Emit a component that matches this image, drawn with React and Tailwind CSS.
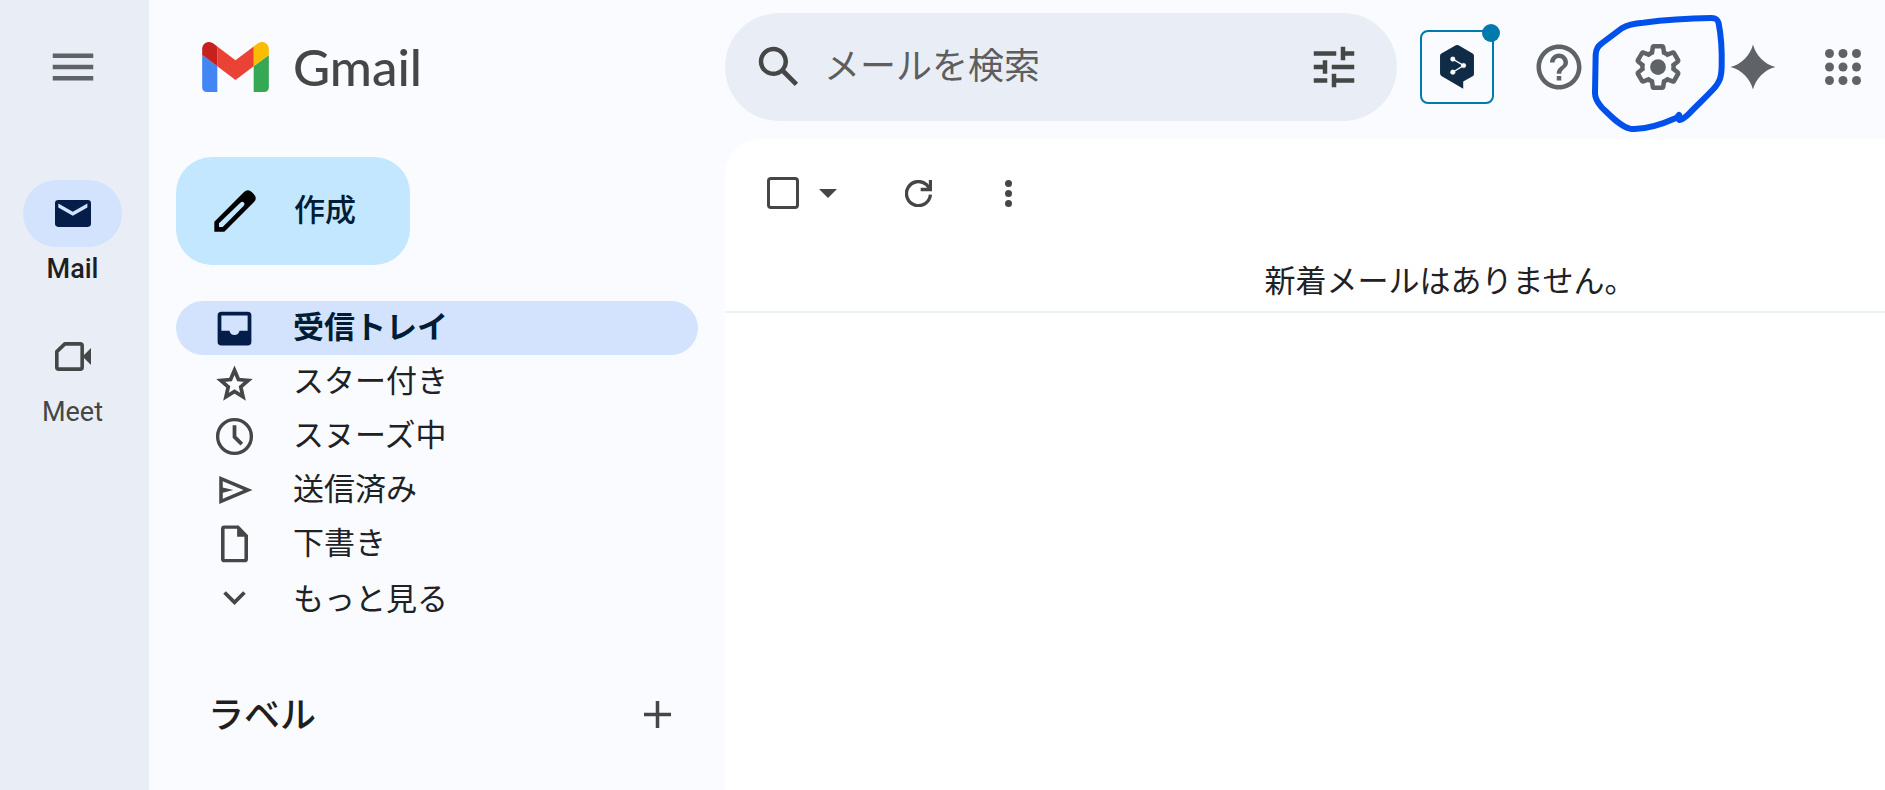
import React, { useState } from "react";
import clsx from "clsx";

const folders = [
  { id: "inbox", label: "受信トレイ", icon: InboxIcon },
  { id: "starred", label: "スター付き", icon: StarIcon },
  { id: "snoozed", label: "スヌーズ中", icon: ClockIcon },
  { id: "sent", label: "送信済み", icon: SendIcon },
  { id: "drafts", label: "下書き", icon: DraftIcon },
];

export default function App() {
  const [activeFolder, setActiveFolder] = useState("inbox");

  return (
    <div className="flex min-h-screen overflow-hidden bg-[#f9fbff] font-['Roboto','Noto_Sans_CJK_JP',sans-serif] text-[#1f1f1f]">
      <AppRail />
      <div className="flex min-w-0 flex-1 flex-col">
        <TopBar />
        <div className="flex flex-1">
          <Sidebar active={activeFolder} onSelect={setActiveFolder} />
          <MailPanel />
        </div>
      </div>
    </div>
  );
}

function AppRail() {
  return (
    <aside className="flex w-[149px] shrink-0 flex-col items-center bg-[#e9eef6] pr-1 pt-10">
      <button type="button" aria-label="メインメニュー" className="text-[#5f6368]">
        <svg viewBox="0 0 24 24" fill="currentColor" className="size-[54px]">
          <path d="M3 18h18v-2H3v2zm0-5h18v-2H3v2zm0-7v2h18V6H3z" />
        </svg>
      </button>
      <nav className="mt-[86px] flex flex-col gap-9">
        <a href="#mail" className="flex flex-col items-center">
          <span className="flex h-[67px] w-[99px] items-center justify-center rounded-full bg-[#d3e3fd] text-[#041e49]">
            <MailIcon />
          </span>
          <span className="mt-1 text-[27px] leading-9 font-medium">Mail</span>
        </a>
        <a href="#meet" className="flex flex-col items-center text-[#444746]">
          <span className="flex h-[67px] w-[99px] items-center justify-center">
            <MeetIcon />
          </span>
          <span className="mt-1 text-[27px] leading-9">Meet</span>
        </a>
      </nav>
    </aside>
  );
}

function TopBar() {
  return (
    <header className="flex items-center pt-[13px] pr-[15px] pb-[18px]">
      <a href="#inbox" className="flex w-[576px] shrink-0 items-center gap-6 pl-[53px]">
        <GmailLogo />
        <span className="font-['Lato',sans-serif] text-[51px] leading-[54px] font-medium text-[#444746]">
          Gmail
        </span>
      </a>

      {/* Search */}
      <form
        role="search"
        className="flex h-[108px] min-w-0 flex-1 items-center rounded-full bg-[#e9eef6] pr-9 pl-[27px]"
        onSubmit={(e) => e.preventDefault()}
      >
        <button type="submit" aria-label="検索" className="text-[#444746]">
          <svg viewBox="0 0 24 24" fill="currentColor" className="size-[54px]">
            <path d="M20.49 19l-5.73-5.73C15.53 12.2 16 10.91 16 9.5 16 5.91 13.09 3 9.5 3S3 5.91 3 9.5 5.91 16 9.5 16c1.41 0 2.7-.47 3.77-1.24L19 20.49 20.49 19zM5 9.5C5 7.01 7.01 5 9.5 5S14 7.01 14 9.5 11.99 14 9.5 14 5 11.99 5 9.5z" />
          </svg>
        </button>
        <input
          type="text"
          aria-label="メールを検索"
          placeholder="メールを検索"
          className="ml-[18px] h-[54px] min-w-0 flex-1 bg-transparent text-[36px] leading-[54px] outline-none placeholder:text-[#5e5e5e]"
        />
        <button type="button" aria-label="検索オプション" className="text-[#444746]">
          <svg viewBox="0 0 24 24" fill="currentColor" className="size-[54px]">
            <path d="M3 17v2h6v-2H3zM3 5v2h10V5H3zm10 16v-2h8v-2h-8v-2h-2v6h2zM7 9v2H3v2h4v2h2V9H7zm14 4v-2H11v2h10zm-6-4h2V7h4V5h-4V3h-2v6z" />
          </svg>
        </button>
      </form>

      <div className="ml-[23px] flex shrink-0 items-center text-[#5f6368]">
        <button
          type="button"
          aria-label="DeepL"
          className="relative flex size-[74px] items-center justify-center rounded-lg border-2 border-[#0079ac]"
        >
          <DeepLIcon />
          <span className="absolute -top-2 -right-2 size-[18px] rounded-full bg-[#0079ac]" />
        </button>
        <button type="button" aria-label="サポート" className="ml-[38px]">
          <svg viewBox="0 0 24 24" fill="currentColor" className="size-[54px]">
            <path d="M11 18h2v-2h-2v2zm1-16C6.48 2 2 6.48 2 12s4.48 10 10 10 10-4.48 10-10S17.52 2 12 2zm0 18c-4.41 0-8-3.59-8-8s3.59-8 8-8 8 3.59 8 8-3.59 8-8 8zm0-14c-2.21 0-4 1.79-4 4h2c0-1.1.9-2 2-2s2 .9 2 2c0 2-3 1.75-3 5h2c0-2.25 3-2.5 3-5 0-2.21-1.79-4-4-4z" />
          </svg>
        </button>
        <button type="button" aria-label="設定" className="relative ml-[45px]">
          <GearIcon />
          <HandDrawnCircle />
        </button>
        <button type="button" aria-label="Gemini" className="ml-[41px]">
          <svg viewBox="0 0 24 24" fill="currentColor" className="size-[54px]">
            <path d="M12 2c1.1 4.6 5.2 8.9 10 10-4.8 1.1-8.9 5.4-10 10-1.1-4.6-5.2-8.9-10-10 4.8-1.1 8.9-5.4 10-10z" />
          </svg>
        </button>
        <button type="button" aria-label="Google アプリ" className="ml-9">
          <svg viewBox="0 0 24 24" fill="currentColor" className="size-[54px]">
            {[6, 12, 18].map((cy) =>
              [6, 12, 18].map((cx) => <circle key={`${cx}-${cy}`} cx={cx} cy={cy} r="2" />)
            )}
          </svg>
        </button>
      </div>
    </header>
  );
}

function Sidebar({ active, onSelect }) {
  return (
    <div className="w-[576px] shrink-0 pt-[18px] pr-[27px] pl-[27px]">
      <button
        type="button"
        className="flex h-[108px] w-[234px] items-center rounded-[36px] bg-[#c2e7ff] pl-8 text-[31px] font-medium text-[#001d35]"
      >
        <PencilIcon />
        <span className="ml-8">作成</span>
      </button>

      <nav className="mt-9">
        {folders.map(({ id, label, icon: Icon }) => (
          <a
            key={id}
            href={`#${id}`}
            onClick={() => onSelect(id)}
            className={clsx(
              "flex h-[54px] items-center rounded-full pl-9 text-[31px] leading-[54px]",
              active === id ? "bg-[#d3e3fd] font-bold text-[#001d35]" : "text-[#202124]"
            )}
          >
            <span
              className={clsx(
                "flex w-[45px] justify-center",
                active === id ? "text-[#041e49]" : "text-[#444746]"
              )}
            >
              <Icon />
            </span>
            <span className="ml-9">{label}</span>
          </a>
        ))}
        <button
          type="button"
          className="mt-0.5 flex h-[54px] w-full items-center pl-9 text-[31px] leading-[54px] text-[#202124]"
        >
          <svg viewBox="0 0 24 24" fill="currentColor" className="size-[45px] text-[#444746]">
            <path d="M16.59 7L12 11.600 7.410 7 6 8.400l6 6 6-6z" />
          </svg>
          <span className="ml-9">もっと見る</span>
        </button>
      </nav>

      {/* Labels */}
      <div className="mt-[60px] flex h-[54px] items-center justify-between pr-[27px] pl-8">
        <h2 className="pt-1 text-[36px] leading-[54px] font-medium">ラベル</h2>
        <button type="button" aria-label="新しいラベルを作成" className="text-[#444746]">
          <svg viewBox="0 0 27 27" stroke="currentColor" strokeWidth="3.5" className="size-[27px]">
            <path d="M13.5 0v27M0 13.5h27" />
          </svg>
        </button>
      </div>
    </div>
  );
}

function MailPanel() {
  return (
    <main className="min-w-0 flex-1 rounded-tl-[36px] bg-white">
      <div className="flex h-[108px] items-center pl-[42px] text-[#444746]">
        <input
          type="checkbox"
          aria-label="選択"
          className="size-8 appearance-none rounded-[4px] border-3 border-[#444746] checked:bg-[#444746]"
        />
        <button type="button" aria-label="選択オプション" className="ml-5">
          <svg viewBox="0 0 18 9" fill="currentColor" className="h-[9px] w-[18px]">
            <path d="M0 0h18L9 9z" />
          </svg>
        </button>
        <button type="button" aria-label="更新" className="ml-[68px]">
          <svg viewBox="0 0 81 81" fill="none" stroke="currentColor" strokeWidth="10" className="size-[27px]">
            <path d="M76.3 44A36 36 0 1 1 64 13.5L74 25" />
            <path d="M76.500 0v28.500H47" />
          </svg>
        </button>
        <button type="button" aria-label="その他" className="ml-[73px]">
          <svg viewBox="0 0 7 27" fill="currentColor" className="h-[27px] w-[7px]">
            <circle cx="3.5" cy="3.5" r="3.5" />
            <circle cx="3.5" cy="13.5" r="3.5" />
            <circle cx="3.5" cy="23.5" r="3.5" />
          </svg>
        </button>
      </div>
      <p className="border-b-2 border-[#eaf0f5] pt-[10px] pb-1 pl-[290px] text-center text-[31px] leading-[50px] text-[#202124]">
        新着メールはありません。
      </p>
    </main>
  );
}

function GmailLogo() {
  return (
    <svg viewBox="52 42 88 66" className="h-[50px] w-[67px]">
      <path fill="#4285f4" d="M58 108h14V74L52 59v43c0 3.32 2.69 6 6 6" />
      <path fill="#34a853" d="M120 108h14c3.32 0 6-2.69 6-6V59l-20 15" />
      <path fill="#fbbc04" d="M120 48v26l20-15v-8c0-7.42-8.47-11.65-14.4-7.2" />
      <path fill="#ea4335" d="M72 74V48l24 18 24-18v26L96 92" />
      <path fill="#c5221f" d="M52 51v8l20 15V48l-5.6-4.2c-5.94-4.45-14.4-.22-14.4 7.2" />
    </svg>
  );
}

function DeepLIcon() {
  return (
    <svg viewBox="117 131 101 131" className="h-[44px] w-[34px]">
      <path
        fill="#0f2b46"
        d="M164 132q4-2 8 0l42 24q4 2 4 7v54q0 5-4 7l-28 16v21l-65-38q-4-3-4-8v-52q0-5 4-7z"
      />
      <g fill="#fff" stroke="#fff">
        <path fill="none" strokeWidth="4" d="M155 173l32 19-32 20" />
        <circle cx="155" cy="173" r="7" />
        <circle cx="187" cy="192" r="7" />
        <circle cx="155" cy="212" r="7" />
      </g>
    </svg>
  );
}

function GearIcon() {
  return (
    <svg viewBox="0 0 24 24" fill="currentColor" className="size-[54px]">
      <path d="M13.85 22.25h-3.7c-.74 0-1.36-.54-1.45-1.27l-.27-1.89c-.27-.14-.53-.29-.79-.46l-1.8.72c-.7.26-1.47-.03-1.81-.65L2.2 15.53c-.35-.66-.2-1.44.36-1.88l1.53-1.19c-.01-.15-.02-.3-.02-.46 0-.15.01-.31.02-.46l-1.52-1.19c-.59-.45-.74-1.26-.37-1.88l1.85-3.19c.34-.62 1.11-.9 1.79-.63l1.81.73c.26-.17.52-.32.78-.46l.27-1.91c.09-.7.71-1.25 1.44-1.25h3.7c.74 0 1.36.54 1.45 1.27l.27 1.89c.27.14.53.29.79.46l1.8-.72c.71-.26 1.48.03 1.82.65l1.84 3.18c.36.66.2 1.44-.36 1.88l-1.52 1.19c.01.15.02.3.02.46s-.01.31-.02.46l1.52 1.19c.56.45.72 1.23.37 1.86l-1.86 3.22c-.34.62-1.11.9-1.8.63l-1.8-.72c-.26.17-.52.32-.78.46l-.27 1.91c-.1.68-.72 1.22-1.46 1.22zm-3.23-2h2.76l.37-2.55.53-.22c.44-.18.88-.44 1.34-.78l.45-.34 2.38.96 1.38-2.4-2.03-1.58.07-.56c.03-.26.06-.51.06-.78s-.03-.53-.06-.78l-.07-.56 2.03-1.58-1.39-2.4-2.39.96-.45-.35c-.42-.32-.87-.58-1.33-.77l-.52-.22-.37-2.55h-2.76l-.37 2.55-.53.21c-.44.19-.88.44-1.34.79l-.45.33-2.38-.95-1.39 2.39 2.03 1.58-.07.56a7 7 0 0 0-.06.79c0 .26.02.53.06.78l.07.56-2.03 1.58 1.38 2.4 2.39-.96.45.35c.43.33.86.58 1.33.77l.53.22.38 2.55z" />
      <circle cx="12" cy="12" r="3.5" />
    </svg>
  );
}

// Blue pen mark around the settings button
function HandDrawnCircle() {
  return (
    <svg
      viewBox="90 36 414 369"
      fill="none"
      stroke="#0050ec"
      strokeWidth="18"
      strokeLinecap="round"
      strokeLinejoin="round"
      className="pointer-events-none absolute -top-7 -left-[41px] h-[123px] w-[138px] max-w-none"
    >
      <path d="M357 345L350 353C305 373 250 390 210 386C180 380 150 345 125 322C110 305 105 295 105 280L107 165C108 145 115 138 125 130L185 85C205 73 225 70 250 68C310 60 380 55 455 54C468 54 473 58 476 70C484 110 486 160 485 200C484 235 478 245 465 262C440 290 415 312 388 340C378 350 368 358 358 360L357 345" />
    </svg>
  );
}

function MailIcon() {
  return (
    <svg viewBox="0 0 109 81" className="h-[27px] w-9">
      <rect width="109" height="81" rx="10" fill="currentColor" />
      <path fill="#d3e3fd" d="M10 10l44 25 44-25v12L54 47 10 22z" />
    </svg>
  );
}

function MeetIcon() {
  return (
    <svg viewBox="0 0 110 88" className="h-[29px] w-9">
      <path
        fill="none"
        stroke="currentColor"
        strokeWidth="11"
        strokeLinejoin="round"
        d="M5.500 29L30 5.500h47q6 0 6 6V76.500q0 6-6 6H11.500q-6 0-6-6z"
      />
      <path fill="currentColor" d="M84 44l26-26v52z" />
    </svg>
  );
}

function PencilIcon() {
  return (
    <svg viewBox="-18 -18 162 162" className="size-[54px]">
      <path
        fill="#000"
        fillRule="evenodd"
        d="M1 125V95L90 6q12-11 24 1l5 5q12 12 1 24L31 125zM15 111h11l62-62q6-6 2-11t-11 0L15 100z"
      />
    </svg>
  );
}

function InboxIcon() {
  return (
    <svg viewBox="0 0 24 24" fill="currentColor" className="size-[45px]">
      <path
        fillRule="evenodd"
        d="M5 3h14a2 2 0 0 1 2 2v14a2 2 0 0 1-2 2H5a2 2 0 0 1-2-2V5a2 2 0 0 1 2-2zm0 2v8.200h4.300c.3 1.400 1.300 2.300 2.700 2.300s2.400-.9 2.700-2.300H19V5z"
      />
    </svg>
  );
}

function StarIcon() {
  return (
    <svg viewBox="0 0 24 24" fill="none" stroke="currentColor" strokeWidth="2" className="size-[45px]">
      <path d="M12 5.500l2.100 4.950 5.200.45-3.950 3.450 1.200 5.250L12 16.800l-4.550 2.800 1.200-5.250L4.700 10.900l5.200-.45z" />
    </svg>
  );
}

function ClockIcon() {
  return (
    <svg viewBox="0 0 24 24" fill="none" stroke="currentColor" className="size-[45px]">
      <circle cx="12" cy="12" r="9" strokeWidth="1.8" />
      <path strokeWidth="2" d="M12 6v6.200l3.900 3.900" />
    </svg>
  );
}

function SendIcon() {
  return (
    <svg viewBox="0 0 24 24" fill="currentColor" className="size-[42px]">
      <path d="M3 20V4l19 8zm2-3l11.850-5L5 7v3.500l6 1.500-6 1.500z" />
    </svg>
  );
}

function DraftIcon() {
  return (
    <svg viewBox="0 0 24 24" fill="currentColor" className="size-[45px]">
      <path
        fillRule="evenodd"
        d="M6.600 21.500a1.800 1.800 0 0 1-1.800-1.800V3.600a1.800 1.800 0 0 1 1.800-1.800h7.600l5 5.200v12.700a1.800 1.800 0 0 1-1.800 1.800zM13.400 7.800V3.600H6.700v16.100h10.600V7.800z"
      />
    </svg>
  );
}
